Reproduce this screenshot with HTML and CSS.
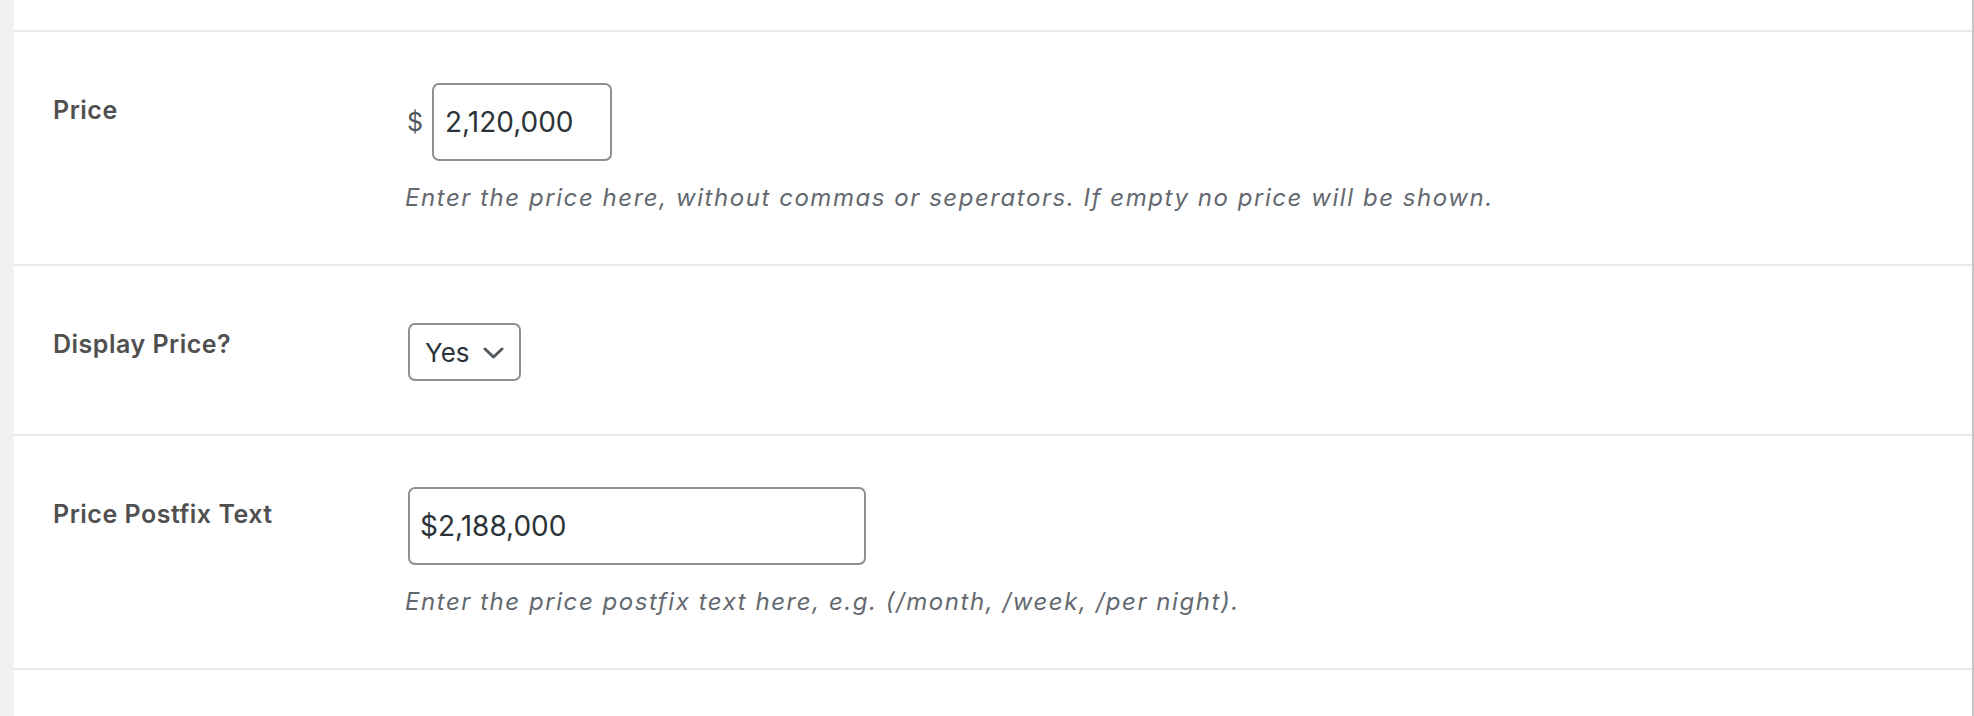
FILE: index.html
```html
<!DOCTYPE html>
<html lang="en">
<head>
<meta charset="utf-8">
<title>Price settings</title>
<link rel="stylesheet" href="styles.css">
</head>
<body>
<div class="page">
  <div class="top-space"></div>
  <div class="row">
    <div class="label">Price</div>
    <div class="field">
      <div class="inline">
        <span class="currency">$</span>
        <div class="input input-price">2,120,000</div>
      </div>
      <p class="description">Enter the price here, without commas or seperators. If empty no price will be shown.</p>
    </div>
  </div>
  <div class="row">
    <div class="label">Display Price?</div>
    <div class="field">
      <div class="select">
        <span>Yes</span>
        <svg class="chevron" width="21" height="12" viewBox="0 0 21 12" aria-hidden="true"><polyline points="2,2 10.5,10 19,2" fill="none" stroke="#50575e" stroke-width="3" stroke-linecap="round" stroke-linejoin="round"/></svg>
      </div>
    </div>
  </div>
  <div class="row">
    <div class="label">Price Postfix Text</div>
    <div class="field">
      <div class="input input-postfix">$2,188,000</div>
      <p class="description">Enter the price postfix text here, e.g. (/month, /week, /per night).</p>
    </div>
  </div>
  <div class="row row-last"></div>
</div>
</body>
</html>
```

FILE: styles.css
```css
html, body {
  margin: 0;
  padding: 0;
  background: #ffffff;
}

body {
  font-family: Inter, "Noto Sans", "Liberation Sans", sans-serif;
  color: #2c3338;
}

.page {
  border-left: 14px solid #f1f1f1;
  border-right: 2px solid #c6c6cb;
  min-height: 716px;
  box-sizing: border-box;
}

.top-space {
  height: 30px;
}

.row {
  display: grid;
  grid-template-columns: 352px 1fr;
  padding-left: 39px;
  border-top: 2px solid #e8e8e8;
}

.row-last {
  height: 46px;
}

.label {
  font-size: 25px;
  font-weight: 600;
  line-height: 32px;
  letter-spacing: 0.5px;
  color: #505050;
  padding-top: 62px;
}

.field {
  padding: 51px 0 49px;
}

.inline {
  display: flex;
  align-items: center;
}

.currency {
  font-size: 25px;
  color: #50575e;
  margin-left: 2px;
  margin-right: 9px;
  line-height: 32px;
}

.input {
  box-sizing: border-box;
  height: 78px;
  border: 2px solid #8c8f94;
  border-radius: 7px;
  padding: 0 11px;
  font-size: 28px;
  color: #2c3338;
  display: flex;
  align-items: center;
  background: #ffffff;
}

.input-price {
  width: 180px;
}

.input-postfix {
  width: 458px;
  margin-left: 3px;
  padding-left: 10px;
}

.description {
  margin: 20px 0 0;
  font-size: 24px;
  line-height: 34px;
  letter-spacing: 1.55px;
  font-style: italic;
  color: #646970;
}

.select {
  box-sizing: border-box;
  width: 113px;
  height: 58px;
  margin: 6px 0 4px 3px;
  border: 2px solid #8c8f94;
  border-radius: 7px;
  padding: 0 15px;
  display: flex;
  align-items: center;
  justify-content: space-between;
  font-size: 26px;
  color: #2c3338;
}

.chevron {
  display: block;
  margin-top: 2px;
}
```
